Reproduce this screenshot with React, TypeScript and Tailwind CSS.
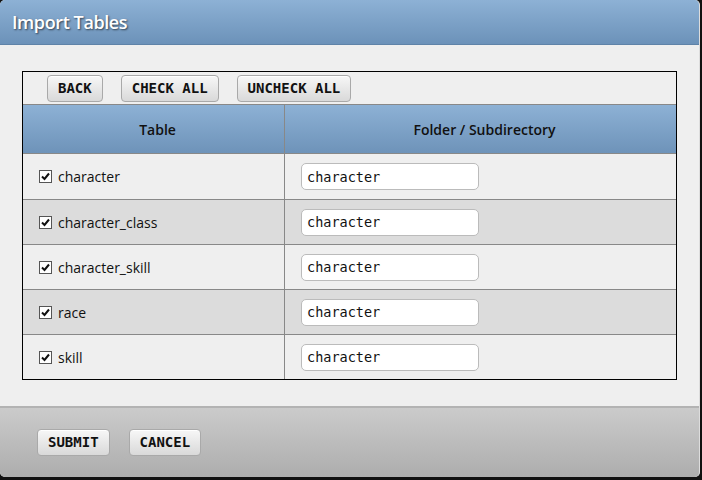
const rows = ["character", "character_class", "character_skill", "race", "skill"];

const sans = "font-['Open_Sans','Noto_Sans',sans-serif]";
const mono = "font-['DejaVu_Sans_Mono','Liberation_Mono',monospace]";

const Btn = ({ label }: { label: string }) => (
  <button
    className={`h-[27px] px-[10px] rounded-[4px] border border-[#a9a9a9] bg-gradient-to-b from-[#f7f7f7] to-[#d9d9d9] text-[14px] font-bold text-[#111] whitespace-pre ${mono} shadow-[inset_0_1px_0_#fff]`}
  >
    {label}
  </button>
);

const Check = () => (
  <span className="w-[13px] h-[13px] border border-[#555] bg-white flex items-center justify-center">
    <svg width="9" height="9" viewBox="0 0 9 9">
      <path d="M1 4.5 L3.5 7 L8 1.5" stroke="#111" strokeWidth="2" fill="none" />
    </svg>
  </span>
);

export default function App() {
  return (
    <div className="w-[702px] h-[480px] bg-[#111]">
      <div className="w-[700px] h-[477px] rounded-[5px] overflow-hidden flex flex-col bg-[#efefef] border-r border-[#ddd]">
        <div className="h-[45px] shrink-0 bg-gradient-to-b from-[#8db1d5] to-[#6c92b9] border-b border-[#5f83a8] flex items-center px-[12px]">
          <h1 className={`text-white text-[18px] font-semibold tracking-[-0.4px] ${sans} [text-shadow:1px_1px_2px_rgba(0,0,0,0.6)]`}>
            Import Tables
          </h1>
        </div>

        <div className="flex-1 px-[22px] pt-[26px]">
          <div className="border border-black bg-[#efefef]">
            <div className="h-[32px] flex items-center gap-[18px] pl-[24px] pt-[1px]">
              <Btn label="BACK" />
              <Btn label="CHECK ALL" />
              <Btn label="UNCHECK ALL" />
            </div>
            <div className={`h-[50px] grid grid-cols-[262px_1fr] border-t border-[#888] border-b bg-gradient-to-b from-[#8db1d5] to-[#6e93b9] text-[14px] font-semibold text-[#111] ${sans}`}>
              <div className="flex items-center justify-center pl-[8px] border-r border-[#888]">Table</div>
              <div className="flex items-center justify-center pl-[8px]">Folder / Subdirectory</div>
            </div>
            {rows.map((r, i) => (
              <div
                key={r}
                className={`h-[45px] grid grid-cols-[262px_1fr] ${i > 0 ? "border-t border-[#888]" : ""} ${
                  i % 2 === 1 ? "bg-[#dcdcdc]" : "bg-[#efefef]"
                }`}
              >
                <div className={`flex items-center gap-[6px] pl-[16px] border-r border-[#888] text-[14px] text-[#111] ${sans}`}>
                  <Check />
                  <span>{r}</span>
                </div>
                <div className="flex items-center pl-[16px]">
                  <input
                    readOnly
                    value="character"
                    className={`w-[178px] h-[27px] rounded-[5px] border border-[#bbb] bg-white px-[5px] text-[13.5px] text-[#111] ${mono} outline-none`}
                  />
                </div>
              </div>
            ))}
          </div>
        </div>

        <div className="h-[71px] shrink-0 border-t-2 border-[#b3b3b3] bg-gradient-to-b from-[#cbcbcb] to-[#adadad] flex items-center gap-[19px] pl-[37px]">
          <Btn label="SUBMIT" />
          <Btn label="CANCEL" />
        </div>
      </div>
    </div>
  );
}
